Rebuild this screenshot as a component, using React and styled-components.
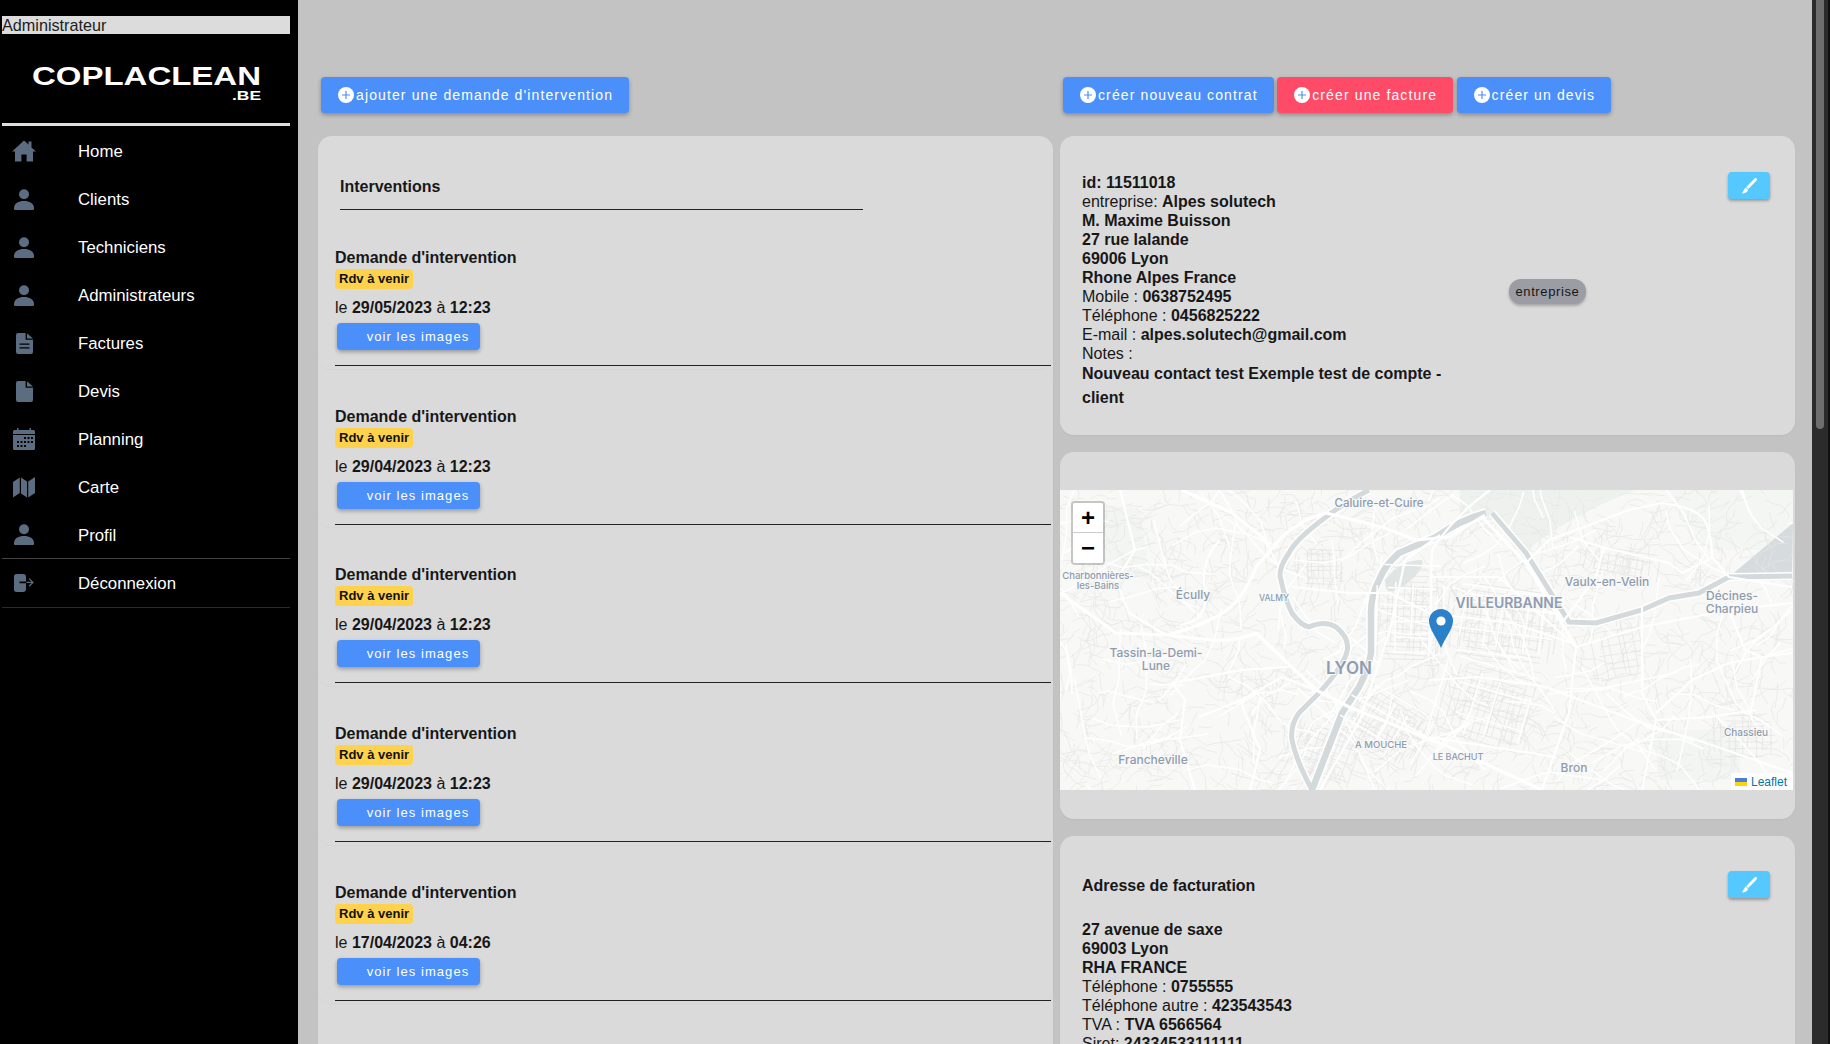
import React from 'react'
import styled, { createGlobalStyle } from 'styled-components'

const HomeIcon = () => (
  <svg width="24" height="22" viewBox="0 0 24 22">
    <path d="M12 0.5L16.5 4.6V1.5H19.5V7.4L24 11.6H21V21.5H14.6V14.5H9.4V21.5H3V11.6H0Z" fill="currentColor" />
  </svg>
)
const UserIcon = () => (
  <svg width="20" height="21" viewBox="0 0 20 21">
    <circle cx="10" cy="5.2" r="5" fill="currentColor" />
    <path d="M0 19c0-4.6 4.5-7 10-7s10 2.400 10 7v1a1 1 0 0 1-1 1H1a1 1 0 0 1-1-1z" fill="currentColor" />
  </svg>
)
const FileIcon = ({ lines }) => (
  <svg width="17" height="21" viewBox="0 0 17 21">
    <path d="M2 0H9.600V6.800H17V19a2 2 0 0 1-2 2H2a2 2 0 0 1-2-2V2a2 2 0 0 1 2-2z" fill="currentColor" />
    <path d="M11 0.300L17 5.400H11z" fill="currentColor" />
    {lines && <path d="M3.500 11.200H13.500M3.500 14.800H13.500" stroke="#000" strokeWidth="1.200" />}
  </svg>
)
const CalendarIcon = () => (
  <svg width="22" height="22" viewBox="0 0 22 22">
    <path d="M4 0h1.500v2H16.500V0H18v2h2.500A1.500 1.500 0 0 1 22 3.500V6H0V3.500A1.500 1.500 0 0 1 1.500 2H4z" fill="currentColor" />
    <path d="M0 7H22V20.500A1.500 1.500 0 0 1 20.500 22H1.500A1.500 1.500 0 0 1 0 20.500z" fill="currentColor" />
    <path
      d="M11 9h2v2h-2zM14.500 9h2v2h-2zM18 9h2v2h-2zM4 13h2v2H4zM7.500 13h2v2h-2zM11 13h2v2h-2zM14.500 13h2v2h-2zM18 13h2v2h-2zM4 17h2v2H4zM7.500 17h2v2h-2zM11 17h2v2h-2z"
      fill="#000"
    />
  </svg>
)
const MapIcon = () => (
  <svg width="22" height="21" viewBox="0 0 22 21">
    <path d="M0 5L6.800 0.500V16L0 20.500ZM8 0.500L14 4.500V20.500L8 16.500ZM15.200 4.500L22 0V16L15.200 20.500Z" fill="currentColor" />
  </svg>
)
const LogoutIcon = () => (
  <svg width="20" height="18" viewBox="0 0 20 18">
    <path d="M2.500 0H9a3 3 0 0 1 3 3v4.600H5.500v1.600H12V15a3 3 0 0 1-3 3H2.500A2.500 2.500 0 0 1 0 15.500v-13A2.500 2.500 0 0 1 2.500 0z" fill="currentColor" />
    <path d="M12.500 8.400h6M15 4.600l4 3.800-4 3.800" stroke="currentColor" strokeWidth="1.200" fill="none" />
  </svg>
)
const BrushIcon = () => (
  <svg width="16" height="16" viewBox="0 0 16 16">
    <path d="M14.600 1.400L7 9.200" stroke="#fff" strokeWidth="2.800" strokeLinecap="round" />
    <path d="M4.600 9.600L7.200 12.200C6 14.400 3.600 15.400 0.800 15.400C2.400 14 2.800 11.200 4.600 9.600Z" fill="#fff" />
  </svg>
)

const navItems = [
  { label: 'Home', icon: <HomeIcon /> },
  { label: 'Clients', icon: <UserIcon /> },
  { label: 'Techniciens', icon: <UserIcon /> },
  { label: 'Administrateurs', icon: <UserIcon /> },
  { label: 'Factures', icon: <FileIcon lines /> },
  { label: 'Devis', icon: <FileIcon /> },
  { label: 'Planning', icon: <CalendarIcon /> },
  { label: 'Carte', icon: <MapIcon /> },
  { label: 'Profil', icon: <UserIcon />, divided: true },
]

const interventions = [
  { date: '29/05/2023', time: '12:23' },
  { date: '29/04/2023', time: '12:23' },
  { date: '29/04/2023', time: '12:23' },
  { date: '29/04/2023', time: '12:23' },
  { date: '17/04/2023', time: '04:26' },
]

// small seeded generator, keeps the street texture identical between runs
const makeRandom = (seed) => () => {
  seed = (seed * 16807) % 2147483647
  return (seed - 1) / 2147483646
}

const buildLanes = (seed, count, minLen, maxLen, bend) => {
  const rnd = makeRandom(seed)
  let d = ''
  for (let i = 0; i < count; i++) {
    let x = rnd() * 733
    let y = rnd() * 300
    let a = rnd() * 6.28
    d += `M${x.toFixed(1)} ${y.toFixed(1)}`
    const steps = 2 + Math.floor(rnd() * 4)
    for (let s = 0; s < steps; s++) {
      a += (rnd() - 0.5) * bend
      const len = minLen + rnd() * (maxLen - minLen)
      x += Math.cos(a) * len
      y += Math.sin(a) * len
      d += `L${x.toFixed(1)} ${y.toFixed(1)}`
    }
  }
  return d
}

const buildGrid = (x0, y0, w, h, step, angle, seed) => {
  const rnd = makeRandom(seed)
  let d = ''
  const rad = (angle * Math.PI) / 180
  const c = Math.cos(rad)
  const s = Math.sin(rad)
  const pt = (u, v) => `${(x0 + u * c - v * s).toFixed(1)} ${(y0 + u * s + v * c).toFixed(1)}`
  for (let u = 0; u <= w; u += step) {
    const off = (rnd() - 0.5) * step * 0.5
    d += `M${pt(u + off, rnd() * h * 0.25)}L${pt(u + off + (rnd() - 0.5) * 3, h - rnd() * h * 0.25)}`
  }
  for (let v = 0; v <= h; v += step) {
    const off = (rnd() - 0.5) * step * 0.5
    d += `M${pt(rnd() * w * 0.25, v + off)}L${pt(w - rnd() * w * 0.25, v + off + (rnd() - 0.5) * 3)}`
  }
  return d
}

const lanes = buildLanes(4242, 1400, 4, 12, 1.6)
const secondaryRoads = buildLanes(977, 130, 12, 34, 0.9)
const fineGrid = [
  buildGrid(322, 78, 60, 90, 6, 2, 11),
  buildGrid(385, 90, 120, 70, 7, 8, 12),
  buildGrid(300, 185, 90, 60, 6, 30, 13),
  buildGrid(395, 170, 90, 75, 7, 16, 14),
  buildGrid(240, 58, 45, 38, 6, 0, 15),
  buildGrid(530, 55, 70, 26, 7, 10, 16),
  buildGrid(655, 225, 60, 45, 7, 0, 17),
  buildGrid(530, 135, 50, 60, 8, -10, 18),
  buildGrid(250, 225, 60, 60, 7, 20, 19),
].join('')
const mainGrid = [
  buildGrid(322, 78, 60, 90, 17, 2, 21),
  buildGrid(385, 90, 120, 70, 21, 8, 22),
  buildGrid(300, 185, 90, 60, 22, 30, 23),
  buildGrid(395, 170, 90, 75, 26, 16, 24),
].join('')

const majorRoads = [
  'M122 0L172 23L202 47L209 57',
  'M106 145Q130 140 156 127T196 77L222 47Q240 30 266 23L322 37L356 50L389 47L425 25',
  'M0 103L56 143L106 145L152 150Q175 152 196 143L256 200L289 217L389 257L482 300',
  'M112 193L182 180L229 177',
  'M56 90L69 123L106 145',
  'M139 227L182 210L222 187L256 200',
  'M369 87L439 87L516 157L509 223L482 300',
  'M422 27L466 73L516 157',
  'M466 73L489 50L569 20L602 13Q640 18 646 33T652 67L669 87L732 97',
  'M509 47L542 57L609 73L622 83L652 68',
  'M516 157L582 137L669 120L732 113',
  'M582 117L582 203L596 230L582 300',
  'M369 190L419 187L486 197L582 233L646 253L732 283',
  'M596 230L649 227L696 220',
  'M596 223L632 190L669 173L702 167L732 163',
  'M369 247L496 267',
  'M544 57L536 87L502 133',
  'M369 123L452 133L512 153',
  'M160 50Q140 70 145 100T120 135',
  'M60 0L75 60L56 90',
  'M260 300L300 230L330 140L345 70L380 45',
  'M232 97L290 103L330 103L369 123',
  'M112 193L125 210L120 250L135 300',
  'M180 210L200 260L190 300',
  'M669 120L685 160L702 167L690 225',
  'M430 0Q395 25 372 60L369 160',
]

const mapLabels = [
  { text: 'Caluire-et-Cuire', x: 319, y: 13, size: 11.5 },
  { text: 'Charbonnières-', x: 38, y: 85, size: 9.5 },
  { text: 'les-Bains', x: 38, y: 95, size: 9.5 },
  { text: 'Écully', x: 133, y: 104, size: 12 },
  { text: 'VALMY', x: 214, y: 108, size: 8.5 },
  { text: 'Tassin-la-Demi-', x: 96, y: 162, size: 12 },
  { text: 'Lune', x: 96, y: 175, size: 12 },
  { text: 'LYON', x: 289, y: 178, size: 17, bold: true },
  { text: 'A MOUCHE', x: 321, y: 254, size: 9.5 },
  { text: 'Francheville', x: 93, y: 269, size: 12 },
  { text: 'LE BACHUT', x: 398, y: 266, size: 9 },
  { text: 'VILLEURBANNE', x: 449, y: 112, size: 14, bold: true },
  { text: 'Vaulx-en-Velin', x: 547, y: 91, size: 12 },
  { text: 'Décines-', x: 672, y: 105, size: 12 },
  { text: 'Charpieu', x: 672, y: 118, size: 12 },
  { text: 'Chassieu', x: 686, y: 242, size: 10 },
  { text: 'Bron', x: 514, y: 277, size: 12 },
]

const saone = 'M309 0Q285 12 266 27Q235 50 229 63Q217 80 221 90Q225 110 232 123Q240 135 249 137Q265 130 276 137Q292 150 286 165Q280 180 259 203L239 223Q230 235 232 250Q236 270 252 300'
const rhone = 'M426 23Q400 30 376 47L339 63Q325 75 319 90Q311 105 311 123V163Q308 180 299 197L282 223L252 300'
const canal = 'M732 86L669 87L639 103L609 108L582 120L536 133L509 132L466 63L432 23'

const MapDrawing = () => (
  <svg width="733" height="300" viewBox="0 0 733 300">
    <defs>
      <linearGradient id="pin" x1="0" y1="0" x2="0" y2="1">
        <stop offset="0" stopColor="#2b82cb" />
        <stop offset="1" stopColor="#2a7fc6" />
      </linearGradient>
    </defs>
    <rect width="733" height="300" fill="#f8f8f7" />
    <path d="M400 0H575Q500 30 466 62L440 30L400 30Z" fill="#eef2ef" />
    <path d="M610 0H733V60L650 60L620 20Z" fill="#f3f6f3" />
    <path d="M10 10L80 20L90 90L20 70Z" fill="#f3f5f2" />
    <path d="M592 240H680V290H600Z" fill="#f2f5f2" />
    <path d="M325 90Q340 70 362 70Q365 80 345 95T325 90Z" fill="#dfe5e4" />
    <path d="M733 33L669 87L732 87Z" fill="#d6dbde" />
    <path d={lanes} stroke="#e7e7e5" strokeWidth="0.7" fill="none" />
    <path d={fineGrid} stroke="#e3e3e2" strokeWidth="0.7" fill="none" />
    <path d={secondaryRoads} stroke="#ffffff" strokeWidth="1.5" fill="none" strokeLinejoin="round" />
    <path d={saone} stroke="#ffffff" strokeWidth="8" fill="none" />
    <path d={rhone} stroke="#ffffff" strokeWidth="10" fill="none" />
    <path d={canal} stroke="#ffffff" strokeWidth="8" fill="none" />
    <path d={saone} stroke="#d4dadc" strokeWidth="5" fill="none" />
    <path d={rhone} stroke="#d4dadc" strokeWidth="6.5" fill="none" />
    <path d={canal} stroke="#d4dadc" strokeWidth="5" fill="none" />
    <path d={mainGrid} stroke="#ffffff" strokeWidth="1.5" fill="none" />
    {majorRoads.map((d, i) => (
      <path key={i} d={d} stroke="#ffffff" strokeWidth={i < 3 || i === 7 ? 3.2 : 2.2} fill="none" strokeLinejoin="round" />
    ))}
    {mapLabels.map((l) => (
      <MapLabel key={l.text} x={l.x} y={l.y} fontSize={l.size} $bold={l.bold}>{l.text}</MapLabel>
    ))}
    <path d="M381 158C377 148 369 139 369 131A12 12 0 0 1 393 131C393 139 385 148 381 158Z" fill="url(#pin)" />
    <circle cx="381" cy="131" r="4.6" fill="#fff" />
  </svg>
)

const UkraineFlag = () => (
  <svg width="12" height="8" viewBox="0 0 12 8">
    <rect width="12" height="4" fill="#4C7BE1" />
    <rect y="4" width="12" height="4" fill="#FFD500" />
  </svg>
)

const PlusIcon = () => (
  <svg width="16" height="16" viewBox="0 0 16 16">
    <circle cx="8" cy="8" r="8" fill="#fff" />
    <path d="M8 4v8M4 8h8" stroke="#4b8ffb" strokeWidth="1.2" />
  </svg>
)

const App = () => {
  return (
    <>
      <GlobalStyle />
      <Shell>
        <Sidebar>
          <RoleLabel>Administrateur</RoleLabel>
          <LogoWrap>
            <svg width="230" height="48" viewBox="0 0 230 48">
              <LogoText x="0" y="31" fontSize="25" textLength="229" lengthAdjust="spacingAndGlyphs">COPLACLEAN</LogoText>
              <LogoText x="200" y="46" fontSize="12" textLength="29" lengthAdjust="spacingAndGlyphs">.BE</LogoText>
            </svg>
          </LogoWrap>
          <SideDivider />
          <SideNav>
            {navItems.map((item) => (
              <NavRow key={item.label} $divided={item.divided}>
                <NavIcon>{item.icon}</NavIcon>
                <NavLabel>{item.label}</NavLabel>
              </NavRow>
            ))}
            <NavRow $logout>
              <NavIcon><LogoutIcon /></NavIcon>
              <NavLabel>Déconnexion</NavLabel>
            </NavRow>
          </SideNav>
        </Sidebar>

        <Main>
          <ActionBar>
            <ActionGroup>
              <ActionButton><PlusIcon />ajouter une demande d'intervention</ActionButton>
            </ActionGroup>
            <ActionGroup>
              <ActionButton><PlusIcon />créer nouveau contrat</ActionButton>
              <ActionButton $danger><PlusIcon />créer une facture</ActionButton>
              <ActionButton><PlusIcon />créer un devis</ActionButton>
            </ActionGroup>
          </ActionBar>

          <Columns>
            <Card>
              <ListHeader>Interventions</ListHeader>
              {interventions.map((item, i) => (
                <InterventionItem key={i}>
                  <strong>Demande d'intervention</strong>
                  <StatusBadge>Rdv à venir</StatusBadge>
                  <DateLine>le <b>{item.date}</b> à <b>{item.time}</b></DateLine>
                  <ImagesButton>voir les images</ImagesButton>
                  <ItemRule />
                </InterventionItem>
              ))}
            </Card>

            <RightStack>
              <ContactCard>
                <Details>
                  <b>id: 11511018</b><br />
                  entreprise: <b>Alpes solutech</b><br />
                  <b>M. Maxime Buisson</b><br />
                  <b>27 rue lalande</b><br />
                  <b>69006 Lyon</b><br />
                  <b>Rhone Alpes France</b><br />
                  Mobile : <b>0638752495</b><br />
                  Téléphone : <b>0456825222</b><br />
                  E-mail : <b>alpes.solutech@gmail.com</b><br />
                  Notes :
                  <NoteText>Nouveau contact test Exemple test de compte - client</NoteText>
                </Details>
                <TypePill>entreprise</TypePill>
                <EditButton aria-label="modifier"><BrushIcon /></EditButton>
              </ContactCard>

              <MapCard>
                <MapFrame>
                  <MapDrawing />
                  <ZoomControl>
                    <ZoomButton>+</ZoomButton>
                    <ZoomButton>−</ZoomButton>
                  </ZoomControl>
                  <Attribution><UkraineFlag /> Leaflet</Attribution>
                </MapFrame>
              </MapCard>

              <AddressCard>
                <AddressHead>
                  <b>Adresse de facturation</b>
                  <EditButton aria-label="modifier"><BrushIcon /></EditButton>
                </AddressHead>
                <Details>
                  <b>27 avenue de saxe</b><br />
                  <b>69003 Lyon</b><br />
                  <b>RHA FRANCE</b><br />
                  Téléphone : <b>0755555</b><br />
                  Téléphone autre : <b>423543543</b><br />
                  TVA : <b>TVA 6566564</b><br />
                  Siret: <b>24334533111111</b>
                </Details>
              </AddressCard>
            </RightStack>
          </Columns>
        </Main>

        <ScrollTrack>
          <ScrollThumb />
        </ScrollTrack>
      </Shell>
    </>
  )
}

const GlobalStyle = createGlobalStyle`
  html, body {
    margin: 0;
    height: 100%;
    overflow: hidden;
  }
  body {
    font-family: 'Liberation Sans', Arial, sans-serif;
    font-size: 16px;
    color: #171717;
  }
  * {
    box-sizing: border-box;
  }
`

const Shell = styled.div`
  display: flex;
  width: 1830px;
  height: 1044px;
  overflow: hidden;
  background-color: #c3c3c3;
`
const Sidebar = styled.aside`
  flex: 0 0 298px;
  background-color: #000;
  padding: 16px 8px 0 2px;
`
const RoleLabel = styled.div`
  height: 18px;
  line-height: 19px;
  background-color: #dcdcdc;
  color: #1c1c1c;
  font-size: 16.2px;
`
const LogoWrap = styled.div`
  height: 89px;
  padding: 20px 0 0 30px;
`
const LogoText = styled.text`
  font-family: 'Liberation Sans', Arial, sans-serif;
  font-weight: 700;
  fill: #fff;
`
const SideDivider = styled.div`
  height: 3px;
  background-color: #dedede;
`
const SideNav = styled.nav`
  padding-top: 1px;
`
const NavRow = styled.a`
  display: flex;
  align-items: center;
  height: ${({ $logout }) => ($logout ? '49px' : '48px')};
  color: #fff;
  font-size: 16.8px;
  border-bottom: ${({ $divided, $logout }) => ($divided ? '1px solid #444' : $logout ? '1px solid #2a2a2a' : 'none')};
`
const NavIcon = styled.span`
  display: flex;
  justify-content: center;
  flex: 0 0 44px;
  margin-right: 32px;
  color: #5c6c81;
`
const NavLabel = styled.span`
  padding-top: 2px;
`
const Main = styled.main`
  flex: 1;
  min-width: 0;
  padding: 77px 17px 0 20px;
`
const ActionBar = styled.div`
  display: grid;
  grid-template-columns: 735px 735px;
  column-gap: 7px;
  padding-left: 3px;
`
const ActionGroup = styled.div`
  display: flex;
  gap: 3.5px;
`
const ActionButton = styled.button`
  display: flex;
  align-items: center;
  gap: 2px;
  height: 36px;
  padding: 0 16px 0 17px;
  border: 0;
  border-radius: 4px;
  background-color: ${({ $danger }) => ($danger ? '#ff4a68' : '#4b8ffb')};
  box-shadow: 0 2px 4px rgba(0, 0, 0, 0.3);
  color: #fff;
  font-family: 'Liberation Sans', Arial, sans-serif;
  font-size: 14px;
  letter-spacing: 1.12px;
`
const Columns = styled.div`
  display: grid;
  grid-template-columns: 735px 735px;
  column-gap: 7px;
  margin-top: 23px;
`
const Card = styled.section`
  background-color: #dadada;
  border-radius: 14px;
  box-shadow: 0 1px 2px rgba(0, 0, 0, 0.04);
`
const ListHeader = styled.div`
  width: 523px;
  height: 74px;
  margin-left: 22px;
  padding-top: 42px;
  line-height: 18px;
  font-weight: 700;
  border-bottom: 1px solid #222;
`
const InterventionItem = styled.article`
  display: flex;
  flex-direction: column;
  align-items: flex-start;
  height: 158.7px;
  padding: 39px 0 0 17px;
  border-radius: 14px;
  box-shadow: 0 1px 2px rgba(0, 0, 0, 0.025);
  line-height: 18px;
`
const StatusBadge = styled.span`
  height: 20px;
  line-height: 20px;
  margin-top: 2px;
  padding: 0 4px;
  border-radius: 4px;
  background-color: #ffd24d;
  color: #111;
  font-size: 13px;
  font-weight: 700;
`
const DateLine = styled.div`
  margin-top: 10px;
  line-height: 18px;
`
const ImagesButton = styled.button`
  width: 143px;
  height: 27px;
  margin: 6px 0 0 2px;
  padding: 0 0 0 19px;
  border: 0;
  border-radius: 4px;
  background-color: #4b8ffb;
  box-shadow: 0 2px 4px rgba(0, 0, 0, 0.3);
  color: #fff;
  font-family: 'Liberation Sans', Arial, sans-serif;
  font-size: 13px;
  letter-spacing: 1.05px;
`
const ItemRule = styled.div`
  align-self: stretch;
  height: 1px;
  margin: 15px 2px 0 0;
  background-color: #222;
`
const RightStack = styled.div`
  display: flex;
  flex-direction: column;
  gap: 17px;
`
const ContactCard = styled(Card)`
  display: grid;
  grid-template-columns: 380px 1fr auto;
  align-items: center;
  height: 299px;
  padding: 37px 25px 26px 22px;
`
const Details = styled.div`
  align-self: start;
  line-height: 19px;
`
const NoteText = styled.div`
  margin-top: -1px;
  line-height: 24px;
  font-weight: 700;
`
const TypePill = styled.span`
  justify-self: start;
  margin: 0 0 1px 47px;
  padding: 0 6.5px;
  height: 25px;
  line-height: 25px;
  border-radius: 12px;
  background-color: #9b9ca4;
  box-shadow: 0 2px 3px rgba(0, 0, 0, 0.25);
  font-size: 13px;
  letter-spacing: 0.6px;
`
const EditButton = styled.button`
  display: flex;
  align-items: center;
  justify-content: center;
  align-self: start;
  width: 42px;
  height: 27px;
  margin-top: -1px;
  padding: 0;
  border: 0;
  border-radius: 4px;
  background-color: #55c8ff;
  box-shadow: 0 2px 3px rgba(0, 0, 0, 0.3);
`
const MapCard = styled(Card)`
  height: 367px;
  padding: 38px 2px 0 0;
`
const MapFrame = styled.div`
  position: relative;
  height: 300px;
  overflow: hidden;
  svg {
    display: block;
  }
`
const MapLabel = styled.text`
  font-family: Inter, 'Open Sans', sans-serif;
  font-weight: ${({ $bold }) => ($bold ? 600 : 500)};
  fill: #8e9cb0;
  text-anchor: middle;
  dominant-baseline: central;
  paint-order: stroke;
  stroke: #f8f8f7;
  stroke-width: 2px;
`
const ZoomControl = styled.div`
  position: absolute;
  top: 11px;
  left: 11px;
  border: 2px solid rgba(0, 0, 0, 0.2);
  border-radius: 4px;
  background-clip: padding-box;
`
const ZoomButton = styled.div`
  width: 30px;
  height: 30px;
  line-height: 29px;
  text-align: center;
  background-color: #fff;
  color: #000;
  font-family: 'Liberation Sans', Arial, sans-serif;
  font-size: 24px;
  font-weight: 700;
  &:first-child {
    border-bottom: 1px solid #ccc;
    border-radius: 2px 2px 0 0;
  }
  &:last-child {
    border-radius: 0 0 2px 2px;
  }
`
const Attribution = styled.div`
  position: absolute;
  right: 0;
  bottom: 0;
  display: flex;
  align-items: center;
  gap: 4px;
  height: 17px;
  padding: 0 6px 0 4px;
  background-color: rgba(255, 255, 255, 0.85);
  color: #0078a8;
  font-size: 12px;
`
const AddressCard = styled(Card)`
  height: 260px;
  padding: 36px 25px 0 22px;
`
const AddressHead = styled.div`
  display: flex;
  justify-content: space-between;
  align-items: center;
  height: 27px;
  margin-bottom: 21px;
`
const ScrollTrack = styled.div`
  flex: 0 0 18px;
  padding: 0 4px;
  background-color: #2b2b2b;
  border-right: 2px solid #111;
`
const ScrollThumb = styled.div`
  width: 8px;
  height: 429px;
  border-radius: 0 0 4px 4px;
  background-color: #6e6e6e;
`

export default App
